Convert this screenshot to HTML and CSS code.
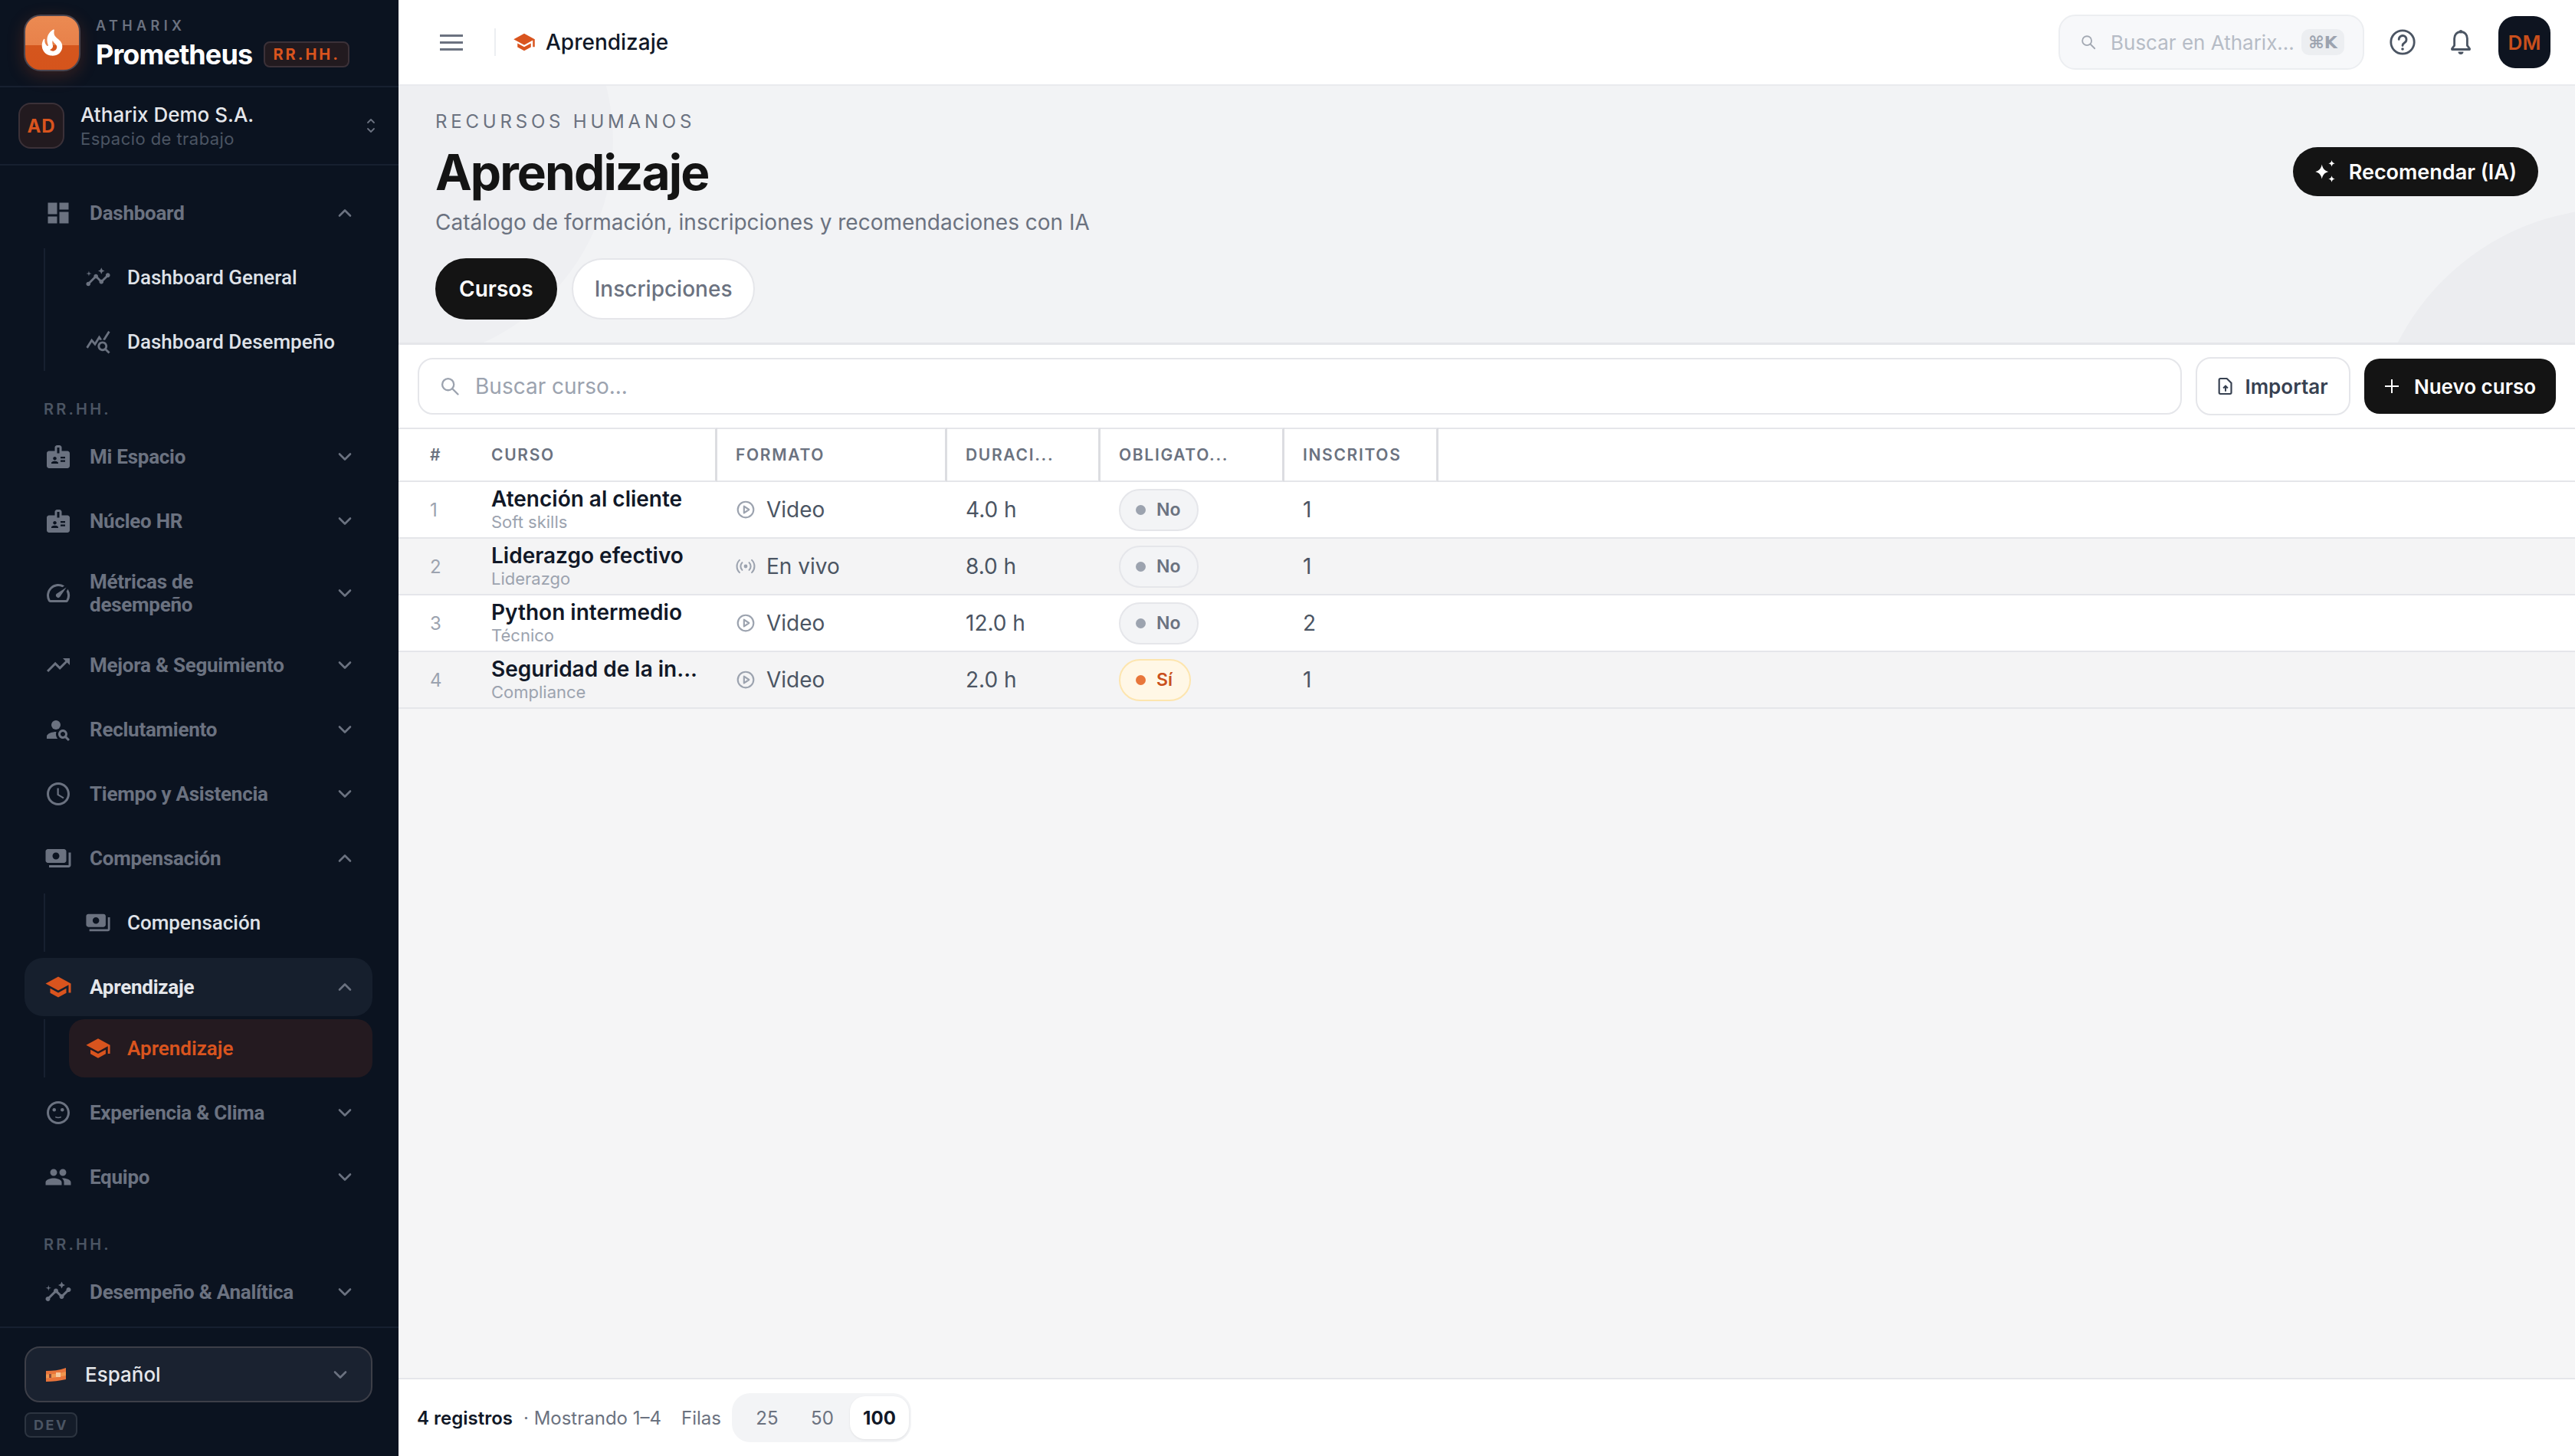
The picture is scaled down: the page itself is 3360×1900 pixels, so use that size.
FILE: index.html
```html
<!DOCTYPE html>
<html lang="es">
<head>
<meta charset="utf-8">
<title>Aprendizaje</title>
<link rel="stylesheet" href="styles.css">
</head>
<body>
<svg class="sprite" xmlns="http://www.w3.org/2000/svg">
<symbol id="i-fire" viewBox="0 0 24 24"><path d="M19.48 12.35c-1.57-4.08-7.16-4.3-5.81-10.23.1-.44-.37-.78-.75-.55C9.29 3.71 6.68 8 8.87 13.62c.18.46-.36.89-.75.59-1.81-1.37-2-3.34-1.84-4.75.06-.52-.62-.77-.91-.34C4.69 10.16 4 11.84 4 14.37c.38 5.6 5.11 7.32 6.81 7.54 2.43.31 5.06-.14 6.95-1.87 2.08-1.93 2.84-5.01 1.72-7.69zm-9.28 5.03c1.44-.35 2.18-1.39 2.38-2.31.33-1.43-.96-2.83-.09-5.09.33 1.87 3.27 3.04 3.27 5.08.08 2.53-2.66 4.7-5.56 2.32z"/></symbol>
<symbol id="i-dash" viewBox="0 0 24 24"><path d="M3 13h8V3H3v10zm0 8h8v-6H3v6zm10 0h8V11h-8v10zm0-18v6h8V3h-8z"/></symbol>
<symbol id="i-insights" viewBox="0 0 24 24"><path d="M21 8c-1.45 0-2.26 1.44-1.93 2.51l-3.55 3.56c-.3-.09-.74-.09-1.04 0l-2.55-2.55C12.27 10.45 11.46 9 10 9c-1.45 0-2.27 1.44-1.93 2.52l-4.56 4.55C2.44 15.74 1 16.55 1 18c0 1.1.9 2 2 2 1.45 0 2.26-1.44 1.93-2.51l4.55-4.56c.3.09.74.09 1.04 0l2.55 2.55C12.73 16.55 13.54 18 15 18c1.45 0 2.27-1.44 1.93-2.52l3.56-3.55c1.07.33 2.51-.48 2.51-1.93 0-1.1-.9-2-2-2zM15 9l.94-2.07L18 6l-2.06-.93L15 3l-.92 2.07L12 6l2.08.93zM3.5 11L4 9l2-.5L4 8l-.5-2L3 8l-2 .5L3 9z"/></symbol>
<symbol id="i-query" viewBox="0 0 24 24"><path d="M19.88 18.47c.44-.7.7-1.51.7-2.39 0-2.49-2.01-4.5-4.5-4.5s-4.5 2.01-4.5 4.5 2.01 4.5 4.49 4.5c.88 0 1.7-.26 2.39-.7L21.58 23 23 21.58l-3.12-3.11zm-3.8.11c-1.38 0-2.5-1.12-2.5-2.5s1.12-2.5 2.5-2.5 2.5 1.12 2.5 2.5-1.12 2.5-2.5 2.5zm-.36-8.5c-.74.02-1.45.18-2.1.45l-.55-.83-3.8 6.18-3.01-3.52-3.63 5.81L1 17l5-8 3 3.5L13 6l2.72 4.08zm2.59.5c-.64-.28-1.33-.45-2.05-.49L21.38 2 23 3.18l-4.69 7.4z"/></symbol>
<symbol id="i-badge" viewBox="0 0 24 24"><path d="M20 7h-5V4c0-1.1-.9-2-2-2h-2c-1.1 0-2 .9-2 2v3H4c-1.1 0-2 .9-2 2v11c0 1.1.9 2 2 2h16c1.1 0 2-.9 2-2V9c0-1.1-.9-2-2-2zM9 12c.83 0 1.5.67 1.5 1.5S9.83 15 9 15s-1.5-.67-1.5-1.5S8.17 12 9 12zm3 6H6v-.75c0-1 2-1.5 3-1.5s3 .5 3 1.5V18zm1-9h-2V4h2v5zm5 7.5h-4V15h4v1.5zm0-3h-4V12h4v1.5z"/></symbol>
<symbol id="i-speed" viewBox="0 0 24 24"><path d="M20.38 8.57l-1.23 1.85a8 8 0 0 1-.22 7.58H5.07A8 8 0 0 1 15.58 6.85l1.85-1.23A10 10 0 0 0 3.35 19a2 2 0 0 0 1.72 1h13.85a2 2 0 0 0 1.74-1 10 10 0 0 0-.27-10.44zm-9.79 6.84a2 2 0 0 0 2.83 0l5.66-8.49-8.49 5.66a2 2 0 0 0 0 2.83z"/></symbol>
<symbol id="i-trend" viewBox="0 0 24 24"><path d="M16 6l2.29 2.29-4.88 4.88-4-4L2 16.59 3.41 18l6-6 4 4 6.3-6.29L22 12V6z"/></symbol>
<symbol id="i-person" viewBox="0 0 24 24"><circle cx="10" cy="8" r="4"/><path d="M10.35 14.01C7.62 13.91 2 15.27 2 18v2h9.54c-2.47-2.76-1.23-5.89-1.19-5.99zM19.43 18.02c.36-.59.57-1.28.57-2.02 0-2.21-1.79-4-4-4s-4 1.79-4 4 1.79 4 4 4c.74 0 1.43-.22 2.02-.57L20.59 22 22 20.59c-1.5-1.5-.79-.8-2.57-2.57zM16 18c-1.1 0-2-.9-2-2s.9-2 2-2 2 .9 2 2-.9 2-2 2z"/></symbol>
<symbol id="i-clock" viewBox="0 0 24 24"><path d="M11.99 2C6.47 2 2 6.48 2 12s4.47 10 9.99 10C17.52 22 22 17.52 22 12S17.52 2 11.99 2zM12 20c-4.42 0-8-3.58-8-8s3.58-8 8-8 8 3.58 8 8-3.58 8-8 8zm.5-13H11v6l5.25 3.15.75-1.23-4.5-2.67z"/></symbol>
<symbol id="i-pay" viewBox="0 0 24 24"><path d="M19 14V6c0-1.1-.9-2-2-2H3c-1.1 0-2 .9-2 2v8c0 1.1.9 2 2 2h14c1.1 0 2-.9 2-2zm-9-1c-1.66 0-3-1.34-3-3s1.34-3 3-3 3 1.34 3 3-1.34 3-3 3zm13-6v11c0 1.1-.9 2-2 2H4v-2h17V7h2z"/></symbol>
<symbol id="i-school" viewBox="0 0 24 24"><path d="M5 13.18v4L12 21l7-3.82v-4L12 17l-7-3.82zM12 3L1 9l11 6 9-4.91V17h2V9L12 3z"/></symbol>
<symbol id="i-mood" viewBox="0 0 24 24"><path d="M11.99 2C6.47 2 2 6.48 2 12s4.47 10 9.99 10C17.52 22 22 17.52 22 12S17.52 2 11.99 2zM12 20c-4.42 0-8-3.58-8-8s3.58-8 8-8 8 3.58 8 8-3.58 8-8 8z"/><circle cx="15.5" cy="9.5" r="1.5"/><circle cx="8.5" cy="9.5" r="1.5"/><path d="M9.5 15.2c1.5.8 3.5.8 5 0v1.1c-1.5.7-3.5.7-5 0z"/></symbol>
<symbol id="i-people" viewBox="0 0 24 24"><path d="M16 11c1.66 0 2.99-1.34 2.99-3S17.66 5 16 5c-1.66 0-3 1.34-3 3s1.34 3 3 3zm-8 0c1.66 0 2.99-1.34 2.99-3S9.66 5 8 5C6.34 5 5 6.34 5 8s1.34 3 3 3zm0 2c-2.33 0-7 1.17-7 3.5V19h14v-2.5c0-2.33-4.67-3.5-7-3.5zm8 0c-.29 0-.62.02-.97.05 1.16.84 1.97 1.97 1.97 3.45V19h6v-2.5c0-2.33-4.67-3.5-7-3.5z"/></symbol>
<symbol id="i-down" viewBox="0 0 24 24"><path d="M5 8.5l7 7 7-7" fill="none" stroke="currentColor" stroke-width="2.6" stroke-linecap="round" stroke-linejoin="round"/></symbol>
<symbol id="i-up" viewBox="0 0 24 24"><path d="M5 15.5l7-7 7 7" fill="none" stroke="currentColor" stroke-width="2.6" stroke-linecap="round" stroke-linejoin="round"/></symbol>
<symbol id="i-search" viewBox="0 0 24 24"><circle cx="10" cy="10" r="6.5" fill="none" stroke="currentColor" stroke-width="2"/><path d="M15 15l6 6" fill="none" stroke="currentColor" stroke-width="2" stroke-linecap="round"/></symbol>
<symbol id="i-play" viewBox="0 0 24 24"><circle cx="12" cy="12" r="9.5" fill="none" stroke="currentColor" stroke-width="2"/><path d="M10 8l6 4-6 4z" fill="none" stroke="currentColor" stroke-width="2" stroke-linejoin="round"/></symbol>
<symbol id="i-live" viewBox="0 0 24 24"><circle cx="12" cy="12" r="2.2"/><path d="M7.8 7.5a6.3 6.3 0 0 0 0 9M16.2 7.5a6.3 6.3 0 0 1 0 9M4.6 4.5a10.5 10.5 0 0 0 0 15M19.4 4.5a10.5 10.5 0 0 1 0 15" fill="none" stroke="currentColor" stroke-width="1.9" stroke-linecap="round"/></symbol>
</svg>

<div class="app">
  <aside class="sidebar">
    <div class="brand">
      <div class="logo"><svg class="logo-flame"><use href="#i-fire"/></svg></div>
      <div class="brand-text">
        <div class="brand-over">ATHARIX</div>
        <div class="brand-line"><span class="brand-name">Prometheus</span><span class="brand-tag">RR.HH.</span></div>
      </div>
    </div>
    <div class="workspace">
      <div class="ws-avatar">AD</div>
      <div class="ws-text">
        <div class="ws-name">Atharix Demo S.A.</div>
        <div class="ws-sub">Espacio de trabajo</div>
      </div>
      <svg class="ws-updown" viewBox="0 0 12 24"><path d="M2 8l4-4 4 4M2 16l4 4 4-4" fill="none" stroke="currentColor" stroke-width="1.8" stroke-linecap="round" stroke-linejoin="round"/></svg>
    </div>

    <nav class="nav">
      <div class="nav-item"><svg class="ico"><use href="#i-dash"/></svg><span class="nav-text">Dashboard</span><svg class="chev"><use href="#i-up"/></svg></div>
      <div class="sub-list">
        <div class="sub-item"><svg class="ico-sub"><use href="#i-insights"/></svg>Dashboard General</div>
        <div class="sub-item"><svg class="ico-sub"><use href="#i-query"/></svg>Dashboard Desempeño</div>
      </div>
      <div class="nav-label">RR.HH.</div>
      <div class="nav-item"><svg class="ico"><use href="#i-badge"/></svg><span class="nav-text">Mi Espacio</span><svg class="chev"><use href="#i-down"/></svg></div>
      <div class="nav-item"><svg class="ico"><use href="#i-badge"/></svg><span class="nav-text">Núcleo HR</span><svg class="chev"><use href="#i-down"/></svg></div>
      <div class="nav-item nav-item-tall"><svg class="ico"><use href="#i-speed"/></svg><span class="nav-text">Métricas de<br>desempeño</span><svg class="chev"><use href="#i-down"/></svg></div>
      <div class="nav-item"><svg class="ico"><use href="#i-trend"/></svg><span class="nav-text">Mejora &amp; Seguimiento</span><svg class="chev"><use href="#i-down"/></svg></div>
      <div class="nav-item"><svg class="ico"><use href="#i-person"/></svg><span class="nav-text">Reclutamiento</span><svg class="chev"><use href="#i-down"/></svg></div>
      <div class="nav-item"><svg class="ico"><use href="#i-clock"/></svg><span class="nav-text">Tiempo y Asistencia</span><svg class="chev"><use href="#i-down"/></svg></div>
      <div class="nav-item"><svg class="ico"><use href="#i-pay"/></svg><span class="nav-text">Compensación</span><svg class="chev"><use href="#i-up"/></svg></div>
      <div class="sub-list">
        <div class="sub-item"><svg class="ico-sub"><use href="#i-pay"/></svg>Compensación</div>
      </div>
      <div class="nav-item nav-item-open"><svg class="ico"><use href="#i-school"/></svg><span class="nav-text">Aprendizaje</span><svg class="chev"><use href="#i-up"/></svg></div>
      <div class="sub-list sub-list-tight">
        <div class="sub-item sub-item-on"><svg class="ico-sub"><use href="#i-school"/></svg>Aprendizaje</div>
      </div>
      <div class="nav-item"><svg class="ico"><use href="#i-mood"/></svg><span class="nav-text">Experiencia &amp; Clima</span><svg class="chev"><use href="#i-down"/></svg></div>
      <div class="nav-item"><svg class="ico"><use href="#i-people"/></svg><span class="nav-text">Equipo</span><svg class="chev"><use href="#i-down"/></svg></div>
      <div class="nav-label">RR.HH.</div>
      <div class="nav-item"><svg class="ico"><use href="#i-insights"/></svg><span class="nav-text">Desempeño &amp; Analítica</span><svg class="chev"><use href="#i-down"/></svg></div>
    </nav>

    <div class="side-foot">
      <div class="lang">
        <svg class="flag" viewBox="0 0 26 18"><path d="M0 4c9 0 17-1 26-4v15c-9 2-17 3-26 3z" fill="#e8743b"/><path d="M0 8.5c9 0 17-1 26-3.5v5c-9 2-17 3-26 3.5z" fill="#f0964f"/><rect x="13" y="6" width="6" height="6" fill="#f5c9a0"/><rect x="4" y="8" width="3" height="5" fill="#8a4a3a"/></svg>
        <span class="lang-text">Español</span>
        <svg class="chev"><use href="#i-down"/></svg>
      </div>
      <div class="dev-tag">DEV</div>
    </div>
  </aside>

  <main class="main">
    <header class="topbar">
      <div class="burger"><i></i><i></i><i></i></div>
      <div class="top-sep"></div>
      <svg class="crumb-ico"><use href="#i-school"/></svg>
      <span class="crumb">Aprendizaje</span>
      <div class="top-search">
        <svg class="top-search-ico"><use href="#i-search"/></svg>
        <span class="top-search-text">Buscar en Atharix...</span>
        <span class="kbd">⌘K</span>
      </div>
      <svg class="top-help" viewBox="0 0 34 34"><circle cx="17" cy="17" r="15.2" fill="none" stroke="currentColor" stroke-width="2.8"/><path d="M12.2 13.4a4.9 4.9 0 1 1 7.6 4.1c-1.8 1.2-2.8 2-2.8 4" fill="none" stroke="currentColor" stroke-width="2.8" stroke-linecap="round"/><circle cx="17" cy="26" r="1.8" fill="currentColor"/></svg>
      <svg class="top-bell" viewBox="0 0 28 34"><path d="M14 3.5c-5 0-8.4 3.9-8.4 8.8v9L2.5 25.5v1h23v-1l-3.1-4.2v-9c0-4.9-3.4-8.8-8.4-8.8z" fill="none" stroke="currentColor" stroke-width="2.8" stroke-linejoin="round"/><circle cx="14" cy="3.2" r="2.2" fill="currentColor"/><path d="M10.5 29.5h7a3.5 3.5 0 0 1-7 0z" fill="currentColor"/></svg>
      <div class="user">DM</div>
    </header>

    <section class="page-head">
      <div class="blob blob-left"></div>
      <div class="blob blob-right"></div>
      <div class="head-left">
        <div class="eyebrow">RECURSOS HUMANOS</div>
        <h1 class="title">Aprendizaje</h1>
        <p class="subtitle">Catálogo de formación, inscripciones y recomendaciones con IA</p>
        <div class="tabs">
          <span class="tab tab-on">Cursos</span>
          <span class="tab">Inscripciones</span>
        </div>
      </div>
      <button class="btn-ai">
        <svg class="btn-ai-ico" viewBox="0 0 30 30"><path d="M11 6c1 5 3 7.5 8 9-5 1.500-7 4-8 9-1-5-3-7.500-8-9 5-1.500 7-4 8-9zM23 1c.5 2.400 1.600 3.500 4 4-2.400.5-3.500 1.600-4 4-.5-2.400-1.600-3.500-4-4 2.400-.5 3.500-1.600 4-4zM23 20c.5 2.400 1.600 3.500 4 4-2.400.5-3.500 1.600-4 4-.5-2.400-1.600-3.500-4-4 2.400-.5 3.500-1.600 4-4z" fill="#fff"/></svg>
        Recomendar (IA)
      </button>
    </section>

    <div class="toolbar">
      <div class="search">
        <svg class="search-ico"><use href="#i-search"/></svg>
        <span class="search-text">Buscar curso...</span>
      </div>
      <button class="btn-light">
        <svg class="btn-file" viewBox="0 0 24 28"><path d="M4 2h10l7 7v15a2 2 0 0 1-2 2H4a2 2 0 0 1-2-2V4a2 2 0 0 1 2-2z" fill="none" stroke="currentColor" stroke-width="2.600" stroke-linejoin="round"/><path d="M12 22v-8M8.500 17l3.500-3.500 3.500 3.500" fill="none" stroke="currentColor" stroke-width="2.400"/></svg>
        Importar
      </button>
      <button class="btn-dark">
        <svg class="btn-plus" viewBox="0 0 20 20"><path d="M10 1v18M1 10h18" stroke="#fff" stroke-width="2" fill="none"/></svg>
        Nuevo curso
      </button>
    </div>

    <div class="table-wrap">
      <table class="grid">
        <colgroup>
          <col class="c-num"><col class="c-name"><col class="c-fmt"><col class="c-dur"><col class="c-req"><col class="c-ins"><col>
        </colgroup>
        <thead>
          <tr>
            <th class="th-num">#</th>
            <th class="th-name">CURSO</th>
            <th class="th-sep">FORMATO</th>
            <th class="th-sep">DURACI...</th>
            <th class="th-sep">OBLIGATO...</th>
            <th class="th-sep">INSCRITOS</th>
            <th></th>
          </tr>
        </thead>
        <tbody>
          <tr>
            <td class="td-num">1</td>
            <td class="td-name"><div class="course">Atención al cliente</div><div class="course-sub">Soft skills</div></td>
            <td><span class="fmt"><svg class="fmt-ico"><use href="#i-play"/></svg>Video</span></td>
            <td>4.0 h</td>
            <td><span class="pill"><i class="dot"></i>No</span></td>
            <td>1</td><td></td>
          </tr>
          <tr class="row-alt">
            <td class="td-num">2</td>
            <td class="td-name"><div class="course">Liderazgo efectivo</div><div class="course-sub">Liderazgo</div></td>
            <td><span class="fmt"><svg class="fmt-ico"><use href="#i-live"/></svg>En vivo</span></td>
            <td>8.0 h</td>
            <td><span class="pill"><i class="dot"></i>No</span></td>
            <td>1</td><td></td>
          </tr>
          <tr>
            <td class="td-num">3</td>
            <td class="td-name"><div class="course">Python intermedio</div><div class="course-sub">Técnico</div></td>
            <td><span class="fmt"><svg class="fmt-ico"><use href="#i-play"/></svg>Video</span></td>
            <td>12.0 h</td>
            <td><span class="pill"><i class="dot"></i>No</span></td>
            <td>2</td><td></td>
          </tr>
          <tr class="row-alt">
            <td class="td-num">4</td>
            <td class="td-name"><div class="course">Seguridad de la in...</div><div class="course-sub">Compliance</div></td>
            <td><span class="fmt"><svg class="fmt-ico"><use href="#i-play"/></svg>Video</span></td>
            <td>2.0 h</td>
            <td><span class="pill pill-yes"><i class="dot"></i>Sí</span></td>
            <td>1</td><td></td>
          </tr>
        </tbody>
      </table>
    </div>

    <footer class="foot">
      <b class="foot-count">4 registros</b>
      <span class="foot-info">· Mostrando 1–4</span>
      <span class="foot-rows">Filas</span>
      <div class="pager">
        <span class="page">25</span>
        <span class="page">50</span>
        <span class="page page-on">100</span>
      </div>
    </footer>
  </main>
</div>
</body>
</html>
```

FILE: styles.css
```css
* { box-sizing: border-box; }
html, body { margin: 0; height: 100%; }
body { font-family: "Inter", "Liberation Sans", sans-serif; background: #fff; color: #111827; overflow: hidden; }
.sprite { display: none; }
.app { display: flex; height: 1900px; }

/* sidebar */
.sidebar { width: 520px; flex: none; background: #0b1320; display: flex; flex-direction: column; }
.brand { height: 114px; flex: none; display: flex; align-items: flex-start; padding: 19px 0 0 31px; border-bottom: 2px solid #172030; }
.logo { width: 74px; height: 74px; border-radius: 22px; border: 2px solid #4b4650; background: linear-gradient(#eb8a52 0, #e8814a 55%, #d5561d 55%, #d5541c 100%); display: flex; align-items: center; justify-content: center; box-shadow: 0 6px 22px rgba(217, 84, 30, .22); }
.logo-flame { width: 40px; height: 44px; fill: #fff; }
.brand-text { margin-left: 20px; }
.brand-over { font-size: 18px; line-height: 22px; font-weight: 600; letter-spacing: .3em; color: #6b7280; margin-top: 4px; }
.brand-line { display: flex; align-items: center; margin-top: 4px; }
.brand-name { font-size: 36px; line-height: 44px; font-weight: 700; letter-spacing: -.025em; color: #fff; }
.brand-tag { margin-left: 15px; height: 34px; width: 112px; border: 2px solid #3b3138; border-radius: 8px; background: #221a1f; color: #d9541e; font-size: 20px; font-weight: 700; letter-spacing: .15em; display: flex; align-items: center; justify-content: center; }
.workspace { height: 102px; flex: none; display: flex; align-items: center; padding: 0 30px 0 24px; border-bottom: 2px solid #172030; }
.ws-avatar { width: 60px; height: 60px; border-radius: 16px; background: #221a1f; border: 2px solid #3b3138; color: #d9541e; font-size: 24px; font-weight: 700; letter-spacing: .04em; display: flex; align-items: center; justify-content: center; }
.ws-text { flex: 1; margin-left: 21px; }
.ws-name { font-size: 26px; line-height: 34px; font-weight: 500; color: #e5e7eb; }
.ws-sub { font-size: 22px; line-height: 28px; letter-spacing: .02em; color: #4b5563; }
.ws-updown { width: 12px; height: 24px; color: #6b7280; }

.nav { flex: 1; display: flex; flex-direction: column; gap: 8px; padding: 24px 34px 0 32px; font-family: "Roboto", "Inter", sans-serif; }
.nav-item { height: 76px; flex: none; display: flex; align-items: center; padding: 0 24px 0 26px; border-radius: 24px; color: #6b7280; }
.nav-item-tall { height: 96px; }
.nav-item-open { background: #161f2d; color: #e5e7eb; }
.nav-item-open .ico { fill: #d9541e; }
.ico { width: 36px; height: 36px; flex: none; fill: #6b7280; }
.nav-text { flex: 1; margin-left: 23px; font-size: 26px; line-height: 30px; font-weight: 700; letter-spacing: -.01em; }
.chev { width: 24px; height: 24px; flex: none; color: #6b7280; }
.sub-list { margin-left: 25px; border-left: 2px solid #172030; padding-left: 31px; display: flex; flex-direction: column; gap: 8px; }
.sub-list-tight { margin-top: -4px; padding-left: 31px; }
.sub-item { height: 76px; display: flex; align-items: center; padding-left: 21px; margin-left: 0; border-radius: 20px; font-size: 26px; font-weight: 500; color: #dfe2e8; margin-left: 0; }
.sub-item-on { background: #241a20; color: #d9541e; font-weight: 600; }
.sub-item-on .ico-sub { fill: #d9541e; }
.ico-sub { width: 34px; height: 34px; flex: none; fill: #6b7280; margin-right: 21px; }
.nav-label { height: 24px; margin: 30px 0 4px 25px; font-size: 20px; line-height: 24px; font-weight: 600; letter-spacing: .16em; color: #4b5563; font-family: "Inter", sans-serif; }

.side-foot { height: 169px; flex: none; border-top: 2px solid #172030; padding: 24px 34px 0 32px; }
.lang { height: 73px; display: flex; align-items: center; border: 2px solid #3d3f48; border-radius: 20px; background: #1a2230; padding: 0 28px 0 26px; }
.flag { width: 26px; height: 18px; flex: none; }
.lang-text { flex: 1; margin-left: 25px; font-size: 26px; font-weight: 500; color: #e5e7eb; }
.lang .chev { width: 24px; height: 24px; }
.dev-tag { width: 69px; height: 33px; margin-top: 13px; border: 2px solid #2c3440; border-radius: 8px; background: #141c29; color: #4b5563; font-size: 18px; font-weight: 700; letter-spacing: .14em; display: flex; align-items: center; justify-content: center; }

/* main column */
.main { flex: 1; min-width: 0; display: flex; flex-direction: column; }
.topbar { height: 112px; flex: none; display: flex; align-items: center; padding: 0 32px 0 54px; border-bottom: 2px solid #e9eaee; background: #fff; }
.burger { width: 30px; display: flex; flex-direction: column; gap: 6px; }
.burger i { height: 3px; background: #6b7280; display: block; }
.top-sep { width: 2px; height: 36px; background: #eceef1; margin: 0 22px 0 41px; }
.crumb-ico { width: 30px; height: 30px; fill: #d9541e; }
.crumb { margin-left: 13px; font-size: 28px; font-weight: 500; color: #111827; }
.top-search { margin-left: auto; width: 399px; height: 72px; display: flex; align-items: center; padding: 0 24px 0 26px; background: #f7f8fa; border: 2px solid #eceef1; border-radius: 22px; }
.top-search-ico { width: 22px; height: 22px; color: #a3a9b3; flex: none; }
.top-search-text { margin-left: 18px; flex: 1; font-size: 26px; color: #b6bcc6; white-space: nowrap; }
.kbd { width: 56px; height: 34px; border-radius: 10px; background: #eceef1; color: #9ca3af; font-size: 22px; font-weight: 600; display: flex; align-items: center; justify-content: center; font-family: "DejaVu Sans", sans-serif; }
.top-help { width: 34px; height: 34px; margin-left: 33px; color: #4b5563; flex: none; }
.top-bell { width: 28px; height: 34px; margin-left: 45px; color: #4b5563; flex: none; }
.user { width: 68px; height: 68px; margin-left: 35px; flex: none; border-radius: 22px; background: #0e1420; color: #c94f1c; font-size: 26px; font-weight: 600; display: flex; align-items: center; justify-content: center; }

.page-head { height: 338px; flex: none; position: relative; overflow: hidden; display: flex; justify-content: space-between; align-items: flex-start; padding: 34px 48px 0; background: #f2f3f5; border-bottom: 3px solid #e5e6ea; }
.blob { position: absolute; border-radius: 50%; background: #eeeff2; }
.blob-left { width: 578px; height: 578px; left: -298px; top: -217px; }
.blob-right { width: 640px; height: 640px; left: 2574px; top: 160px; background: #ecedf0; }
.head-left { position: relative; }
.eyebrow { font-size: 24px; line-height: 26px; letter-spacing: .2em; color: #6b7280; }
.title { margin: 14px 0 0; font-size: 64px; line-height: 78px; font-weight: 700; letter-spacing: -.03em; color: #141414; }
.subtitle { margin: 8px 0 0; font-size: 28px; line-height: 36px; color: #6b7280; }
.tabs { display: flex; gap: 19px; margin-top: 29px; }
.tab { height: 80px; display: flex; align-items: center; padding: 0 28px; border-radius: 40px; background: #fff; border: 2px solid #e5e6ea; color: #6b7280; font-size: 28px; font-weight: 500; }
.tab-on { background: #141414; border-color: #141414; color: #fff; font-weight: 600; padding: 0 29px; }
.btn-ai { position: relative; margin-top: 46px; height: 64px; padding: 0 28px 0 26px; display: flex; align-items: center; gap: 15px; border: 0; border-radius: 32px; background: #141414; color: #fff; font-family: inherit; font-size: 27px; font-weight: 600; }
.btn-ai-ico { width: 32px; height: 32px; }

.toolbar { height: 108px; flex: none; display: flex; align-items: center; gap: 18px; padding: 0 25px; background: #fff; }
.search { flex: 1; height: 74px; display: flex; align-items: center; padding-left: 26px; border: 2px solid #e5e6ea; border-radius: 20px; background: #fff; }
.search-ico { width: 28px; height: 28px; color: #9ca3af; flex: none; }
.search-text { margin-left: 19px; font-size: 28px; color: #9ca3af; }
.btn-light { width: 202px; height: 76px; display: flex; align-items: center; justify-content: center; gap: 15px; border: 2px solid #e5e6ea; border-radius: 20px; background: #fff; color: #374151; font-family: inherit; font-size: 26px; font-weight: 600; }
.btn-file { width: 20px; height: 28px; color: #374151; }
.btn-dark { width: 250px; height: 72px; display: flex; align-items: center; justify-content: center; gap: 19px; border: 0; border-radius: 20px; background: #141414; color: #fff; font-family: inherit; font-size: 26px; font-weight: 600; }
.btn-plus { width: 20px; height: 20px; }

.table-wrap { flex: 1; background: #f5f5f6; min-height: 0; }
.grid { width: 100%; table-layout: fixed; border-collapse: separate; border-spacing: 0; background: #fff; }
.c-num { width: 97px; }
.c-name { width: 319px; }
.c-fmt { width: 300px; }
.c-dur { width: 200px; }
.c-req { width: 240px; }
.c-ins { width: 201px; }
.grid th { height: 71px; padding: 0 0 0 24px; text-align: left; font-size: 21px; font-weight: 600; letter-spacing: .08em; color: #6b7280; background: #fff; border-top: 2px solid #e5e6ea; border-bottom: 2px solid #e5e6ea; border-right: 3px solid #dcdde1; white-space: nowrap; }
.grid th:last-child { border-right: 0; }
.grid .th-num { padding-left: 41px; border-right: 0; }
.grid .th-name { padding-left: 24px; }
.grid td { height: 74px; padding: 0 0 0 24px; font-size: 28px; color: #4b5563; border-bottom: 2px solid #e5e6ea; background: #fff; white-space: nowrap; }
.grid .row-alt td { background: #f4f4f5; }
.grid .td-num { padding-left: 41px; font-size: 24px; color: #9ca3af; }
.course { font-size: 28px; line-height: 32px; font-weight: 600; color: #111827; }
.course-sub { font-size: 22px; line-height: 28px; color: #9ca3af; }
.fmt { display: flex; align-items: center; gap: 14px; }
.fmt-ico { width: 26px; height: 26px; color: #9ca3af; fill: #9ca3af; flex: none; }
.pill { display: inline-flex; align-items: center; gap: 14px; height: 55px; padding: 0 22px 0 20px; border: 2px solid #e5e6ea; border-radius: 28px; background: #f3f4f6; color: #6b7280; font-size: 23px; font-weight: 600; vertical-align: middle; }
.dot { width: 13px; height: 13px; border-radius: 50%; background: #9ca3af; }
.pill-yes { background: #fff7e6; border-color: #fde5ae; color: #c9501c; }
.pill-yes .dot { background: #e8763a; }

.foot { height: 102px; flex: none; display: flex; align-items: center; padding-left: 24px; background: #fff; border-top: 2px solid #e5e6ea; font-size: 24px; }
.foot-count { font-weight: 600; color: #111827; }
.foot-info { margin-left: 14px; color: #6b7280; }
.foot-rows { margin-left: 26px; color: #6b7280; }
.pager { margin-left: 14px; height: 64px; display: flex; align-items: center; gap: 0; padding: 0 3px 0 10px; background: #f3f4f6; border-radius: 24px; }
.page { width: 72px; height: 56px; display: flex; align-items: center; justify-content: center; color: #6b7280; font-size: 24px; }
.page-on { width: 77px; background: #fff; border-radius: 20px; color: #111827; font-weight: 700; box-shadow: 0 1px 3px rgba(0, 0, 0, .08); }
```
